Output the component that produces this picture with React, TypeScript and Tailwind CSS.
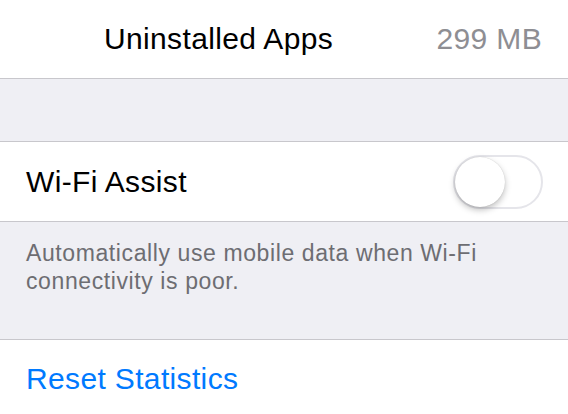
import { useState } from "react";

const font = { fontFamily: '"Liberation Sans", Arial, sans-serif' };

export default function App() {
  const [assist, setAssist] = useState(false);

  return (
    <div
      className="w-[568px] h-[414px] overflow-hidden bg-[#efeff4] text-black antialiased"
      style={font}
    >
      {/* storage row */}
      <div className="flex h-[78px] items-center justify-between bg-white pl-[104px] pr-[26px] text-[30px] leading-none tracking-[0.35px]">
        <span>Uninstalled Apps</span>
        <span className="text-[#8e8e93]">299 MB</span>
      </div>
      <div className="h-px bg-[#c8c7cc]" />

      <div className="h-[62px]" />

      <div className="h-px bg-[#c8c7cc]" />
      <div className="flex h-[79px] items-center justify-between bg-white pl-[26px] pr-[25px]">
        <span className="text-[30px] leading-none tracking-[0.35px]">Wi-Fi Assist</span>
        <Toggle on={assist} onChange={() => setAssist(!assist)} />
      </div>
      <div className="h-px bg-[#c8c7cc]" />

      <p className="h-[117px] px-[26px] pt-[17px] text-[23px] leading-[28px] tracking-[0.6px] text-[#6d6d72]">
        Automatically use mobile data when Wi-Fi
        <br />
        connectivity is poor.
      </p>

      <div className="h-px bg-[#c8c7cc]" />
      <div className="flex h-[78px] items-center bg-white px-[26px]">
        <button className="text-[30px] leading-none tracking-[0.35px] text-[#007aff]">
          Reset Statistics
        </button>
      </div>
    </div>
  );
}

function Toggle({ on, onChange }: { on: boolean; onChange: () => void }) {
  return (
    <button
      onClick={onChange}
      className={`relative h-[54px] w-[90px] rounded-full border-2 ${
        on ? "border-[#4cd964] bg-[#4cd964]" : "border-[#e5e5ea] bg-white"
      }`}
    >
      <span
        className={`absolute top-[0px] h-[50px] w-[50px] rounded-full bg-white shadow-[0_3px_6px_rgba(0,0,0,0.25),0_0_1px_rgba(0,0,0,0.2)] ${
          on ? "left-[36px]" : "left-[0px]"
        }`}
      />
    </button>
  );
}
